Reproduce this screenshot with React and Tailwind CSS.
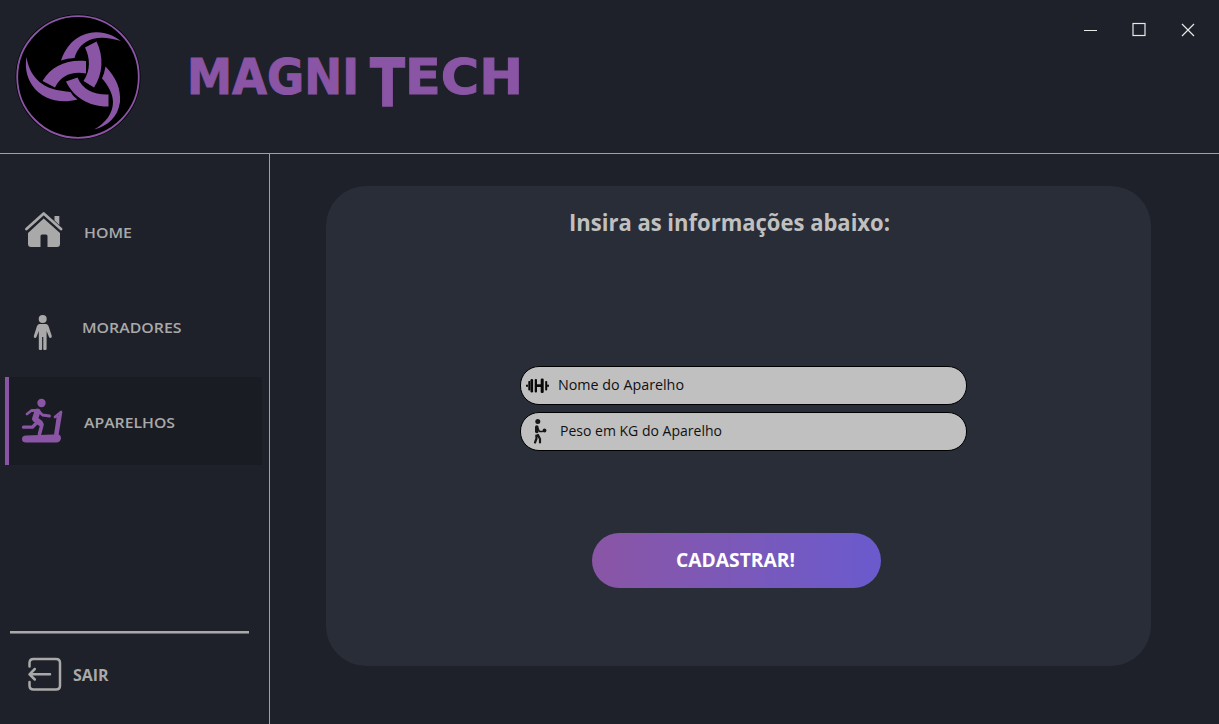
import React from "react";

const Label = ({ children, w, className = "" }) => (
  <svg className={`shrink-0 overflow-visible ${className}`} width={w} height="20">
    <text x="0" y="15" fill="currentColor" textLength={w} lengthAdjust="spacingAndGlyphs">{children}</text>
  </svg>
);

const Emblem = () => (
  <svg className="shrink-0" width="128" height="128" viewBox="14 13 128 128">
    <circle cx="78" cy="77" r="62.5" fill="#000" />
    <circle cx="78" cy="77" r="60.8" fill="none" stroke="#8a55a5" strokeWidth="1.8" />
    <g fill="#8a55a5">
      <path d="M61 60.500C67 44 78 33 96 32.300C106 32 114 36 121 41C108 37 95 36 86 42C79 46 76 53 74.500 58Q67 58 61 60.500Z" />
      <path d="M85 47.500L96.500 41.500C104 57 103 74 94 87.500L83.500 81C91 70 90 58 85 47.500Z" />
      <path d="M42.500 81C51 66 67 59 86 61V73.500C71 71 61 76 55 87.500Z" />
      <path d="M26.500 57C29 75 41 88 60 90.500Q67 91.500 70.500 92Q73 96.500 77.500 99.500C60 104 42 100 32 85C26 76 25 66 26.500 57Z" />
      <path d="M66 81.500L77.500 77.500C83 90 94 95 108.500 94.500V106.500C90 107 74 98 66 81.500Z" />
      <path d="M105.500 66.500C116 77 121 89 120 102C118 117 108 126 94 129.500C106 123 113 113 113 102C113 94 108 85 102 78.500Q104.500 73 105.500 66.500Z" />
    </g>
  </svg>
);

const Wordmark = () => (
  <svg className="ml-[44px] mt-[15px] shrink-0" width="340" height="104" viewBox="186 28 340 104" fill="#8a55a5" stroke="#8a55a5" strokeWidth="1" fontFamily="'DejaVu Sans', sans-serif" fontWeight="700" fontSize="49">
    <text x="187" y="94" textLength="172" lengthAdjust="spacingAndGlyphs">MAGNI</text>
    <text transform="translate(370 106) scale(1 1.36)" x="0" y="0" textLength="35" lengthAdjust="spacingAndGlyphs">T</text>
    <text x="405" y="94" textLength="118" lengthAdjust="spacingAndGlyphs">ECH</text>
  </svg>
);

const HomeIcon = () => (
  <svg width="38" height="38" viewBox="25 211 38 38" fill="#a9a9a9">
    <path d="M26.500 229L43.700 213.500L61 229" fill="none" stroke="#a9a9a9" strokeWidth="2.800" strokeLinecap="round" strokeLinejoin="round" />
    <path d="M54.500 216H59.300V225L54.500 220.500Z" />
    <path d="M43.700 218.500L60 233V244Q60 247 57 247H47.500V236Q47.500 234.500 46 234.500H42Q40.500 234.500 40.500 236V247H31Q28 247 28 244V233Z" />
  </svg>
);

const PersonIcon = () => (
  <svg width="20" height="37" viewBox="33 314 20 37" fill="#a9a9a9">
    <circle cx="42.700" cy="319" r="4" />
    <path d="M39.500 324H46Q47.500 324 48.500 326L51.800 336Q52 338 50.300 338Q49.500 338 49 337L46.600 331V349Q46.600 350 45.400 350H44Q43.300 350 43.300 349V337H42.100V349Q42.100 350 41 350H40Q38.800 350 38.800 349V331L36.500 337Q36 338 35 338Q33.500 338 33.800 336L37 326Q38 324 39.500 324Z" />
  </svg>
);

const TreadmillIcon = () => (
  <svg width="44" height="46" viewBox="21 398 44 46" fill="none" stroke="#8a55a5" strokeLinecap="round" strokeLinejoin="round">
    <circle cx="41.500" cy="403" r="4.200" fill="#8a55a5" stroke="none" />
    <path d="M27 414L31.500 410.500H38L42.500 415L49.500 416" strokeWidth="2.800" />
    <path d="M37.500 411.500L35 419L40 423" strokeWidth="6" />
    <path d="M36 420L42 424.500L39.500 434" strokeWidth="3.600" />
    <path d="M23.500 427.200H32.500L35.500 424" strokeWidth="3.300" />
    <path d="M55 417L61 412L57 436M58 417L55.500 434" strokeWidth="2.700" />
    <path d="M26 435.500L53 434.500Q61 432.500 61 438.500Q60 442.500 56.500 442.500H26Q22 442.500 22 439Q22 435.500 26 435.500Z" fill="#8a55a5" stroke="none" />
  </svg>
);

const ExitIcon = () => (
  <svg width="36" height="36" viewBox="27 656 36 36" fill="none" stroke="#a9a9a9" strokeWidth="2.500" strokeLinecap="round" strokeLinejoin="round">
    <path d="M29.500 666.500V663Q29.500 659 33.500 659H56Q60 659 60 663V685.500Q60 689.500 56 689.500H33.500Q29.500 689.500 29.500 685.500V682" />
    <path d="M50 674.300H30M34.800 669L29.500 674.300L34.800 679.500" />
  </svg>
);

const DumbbellIcon = () => (
  <svg width="24" height="18" viewBox="526 376 24 18" fill="#080808">
    <rect x="526" y="383.500" width="2" height="2.500" rx="1" />
    <rect x="528.300" y="380" width="2.100" height="9.500" rx=".8" />
    <rect x="530.500" y="378" width="2.600" height="13.500" rx="1.200" />
    <rect x="534.700" y="378" width="2.300" height="13.500" rx="1" />
    <rect x="536" y="383.300" width="5" height="2.700" />
    <rect x="540.700" y="377.500" width="3" height="14.500" rx="1.200" />
    <rect x="545.200" y="380" width="2" height="9.500" rx=".8" />
    <rect x="547" y="383.500" width="2" height="2.500" rx="1" />
  </svg>
);

const LifterIcon = () => (
  <svg width="16" height="28" viewBox="534 417.500 16 28" fill="none" stroke="#171717" strokeLinecap="round" strokeLinejoin="round">
    <circle cx="538.800" cy="421" r="2.500" fill="#171717" stroke="none" />
    <path d="M537.800 426.500V431" strokeWidth="3.600" />
    <path d="M539 428L540.500 431H543.500" strokeWidth="1.500" />
    <circle cx="545.500" cy="430" r="1.900" fill="#171717" stroke="none" />
    <path d="M537.300 435L537.500 438L536 442M539 434.500L541 438.500L541 442" strokeWidth="2.200" />
  </svg>
);

const NavItem = ({ icon, label, w, active, offset, iconOffset = "" }) => (
  <a className={`flex h-[88px] w-[257px] items-center border-l-4 ${active ? "border-[#8a55a5] bg-[#1a1c23]" : "border-transparent"}`}>
    <span className={`flex w-[68px] shrink-0 justify-center ${iconOffset}`}>{icon}</span>
    <Label w={w} className={offset}>{label}</Label>
  </a>
);

const Field = ({ icon, label, w, gap, pad }) => (
  <div className={`flex h-[39px] w-[447px] items-center rounded-[19px] border-[1.5px] border-black bg-[#c0c0c0] text-[14px] text-[#101010] ${pad} ${gap}`}>
    {icon}
    <Label w={w} className="mb-[2px]">{label}</Label>
  </div>
);

export default function App() {
  return (
    <div className="flex h-[724px] w-[1219px] flex-col overflow-hidden bg-[#1e2129] font-['Open_Sans','Noto_Sans',sans-serif]">
      <header className="flex h-[154px] shrink-0 items-start border-b border-[#a0a0a0] pl-[14px] pt-[13px]">
        <Emblem />
        <Wordmark />
        <svg className="ml-[557px] mt-[9px] shrink-0" width="114" height="16" viewBox="1083 22 114 16" fill="none" stroke="#e8e8e8" strokeWidth="1.200">
          <path d="M1084 30.500H1097M1182 24L1194 36M1194 24L1182 36" />
          <rect x="1133" y="23.500" width="12" height="12" />
        </svg>
      </header>
      <div className="flex min-h-0 flex-1">
        <aside className="flex w-[270px] shrink-0 flex-col border-r border-[#a0a0a0] pl-[5px] pt-[33px] text-[15px] font-semibold text-[#a9a9a9]">
          <nav className="flex flex-col gap-[7px]">
            <NavItem icon={<HomeIcon />} label="HOME" w={48} offset="ml-[7px] mt-1" iconOffset="pl-[2px] pb-[2px]" />
            <NavItem icon={<PersonIcon />} label="MORADORES" w={99.5} offset="ml-[4.5px] mt-1" iconOffset="pt-[12px]" />
            <NavItem icon={<TreadmillIcon />} label="APARELHOS" w={91} offset="ml-[7px] mt-1" active />
          </nav>
          <div className="ml-[5px] mt-[166px] h-[3px] w-[239px] border-b border-[#686a6f] bg-[#a9a9a9]" />
          <a className="ml-[22px] mt-[22px] flex items-center gap-[10px] text-[16px] font-bold">
            <ExitIcon />
            <Label w={35.5} className="mt-[3px]">SAIR</Label>
          </a>
        </aside>
        <main className="flex-1 pl-[56px] pt-[32px]">
          <section className="flex h-[480px] w-[825px] flex-col rounded-[40px] bg-[#292d37]">
            <h1 className="ml-[243px] mt-[30px] h-5 text-[23px] font-bold text-[#c0c0c0]"><Label w={321}>Insira as informações abaixo:</Label></h1>
            <div className="ml-[194px] mt-[130px] flex flex-col gap-[7px]">
              <Field icon={<DumbbellIcon />} label="Nome do Aparelho" w={126} pad="pl-[5px]" gap="gap-[8px]" />
              <Field icon={<LifterIcon />} label="Peso em KG do Aparelho" w={162} pad="pl-[12px]" gap="gap-[11px]" />
            </div>
            <button className="ml-[266px] mt-[82px] flex h-[55px] w-[289px] items-center justify-center rounded-[28px] bg-linear-to-r from-[#8a55a5] to-[#6a5acd] text-[19px] font-bold text-white">
              <Label w={119} className="mr-[2px] mt-[3px]">CADASTRAR!</Label>
            </button>
          </section>
        </main>
      </div>
    </div>
  );
}
